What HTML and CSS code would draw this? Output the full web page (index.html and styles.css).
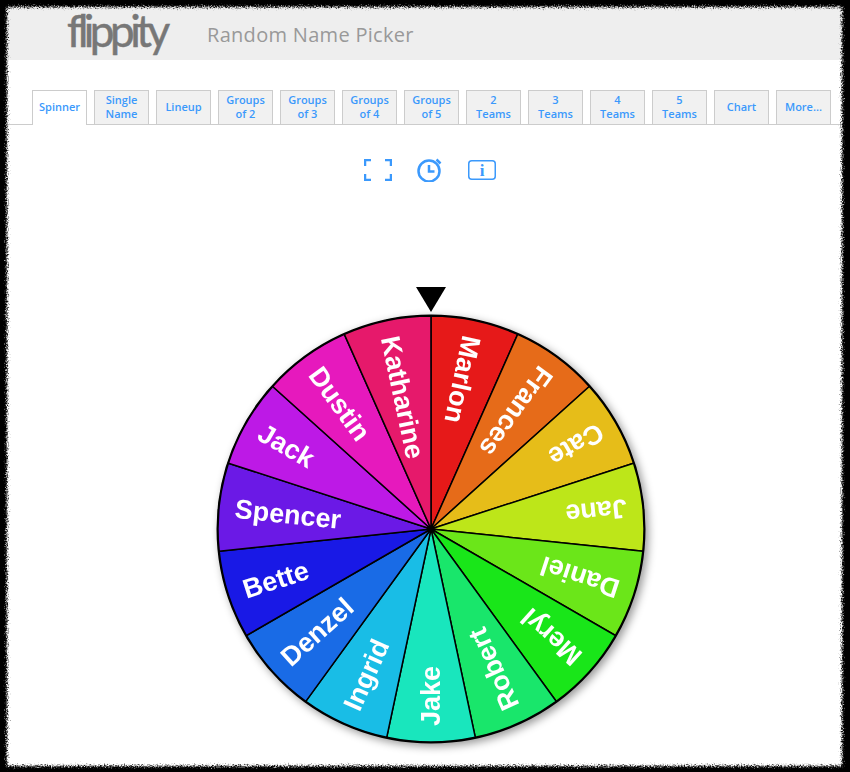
FILE: index.html
```html
<!DOCTYPE html>
<html lang="en">
<head>
    <meta charset="UTF-8">
    <title>Random Name Picker</title>
    <link rel="stylesheet" href="styles.css">
</head>
<body>

    <div class="sheet">
        <div class="header">
            <span class="logo">flippity</span>
            <span class="title">Random Name Picker</span>
        </div>

        <div class="tabs">
            <a class="tab active">Spinner</a>
            <a class="tab">Single<br>Name</a>
            <a class="tab">Lineup</a>
            <a class="tab">Groups<br>of 2</a>
            <a class="tab">Groups<br>of 3</a>
            <a class="tab">Groups<br>of 4</a>
            <a class="tab">Groups<br>of 5</a>
            <a class="tab">2<br>Teams</a>
            <a class="tab">3<br>Teams</a>
            <a class="tab">4<br>Teams</a>
            <a class="tab">5<br>Teams</a>
            <a class="tab">Chart</a>
            <a class="tab">More...</a>
        </div>

        <div class="tools">
            <svg class="tool" width="28" height="22" viewBox="0 0 28 22">
                <path d="M1 7V1H7M21 1H27V7M27 15V21H21M7 21H1V15" />
            </svg>
            <svg class="tool" width="26" height="24" viewBox="0 0 26 24">
                <circle cx="12" cy="13" r="10.5" />
                <path d="M12 7V13.5H17.5" />
                <path d="M19.5 1.5L23.5 5.5" />
            </svg>
            <svg class="tool" width="28" height="20" viewBox="0 0 28 20">
                <rect x="0.75" y="0.75" width="26.5" height="18.5" rx="3" />
                <text class="info-i" x="14" y="15.5">i</text>
            </svg>
        </div>

        <div class="stage">
            <svg class="wheel" width="440" height="470" viewBox="-220 -240 440 470">
                <path class="pointer" d="M-15 -242H15L0 -217Z" />
                <g class="spinner">
                    <circle r="213" fill="#000" />
                    <g transform="rotate(0)">
                        <path class="wedge" fill="hsl(0,80%,50%)" d="M0 0V-213A213 213 0 0 1 86.6 -194.6Z" />
                        <text class="name" transform="rotate(102) translate(-197 0)" dy="0.35em">Marlon</text>
                    </g>
                    <g transform="rotate(24)">
                        <path class="wedge" fill="hsl(24,80%,50%)" d="M0 0V-213A213 213 0 0 1 86.6 -194.6Z" />
                        <text class="name" transform="rotate(102) translate(-197 0)" dy="0.35em">Frances</text>
                    </g>
                    <g transform="rotate(48)">
                        <path class="wedge" fill="hsl(48,80%,50%)" d="M0 0V-213A213 213 0 0 1 86.6 -194.6Z" />
                        <text class="name" transform="rotate(102) translate(-197 0)" dy="0.35em">Cate</text>
                    </g>
                    <g transform="rotate(72)">
                        <path class="wedge" fill="hsl(72,80%,50%)" d="M0 0V-213A213 213 0 0 1 86.6 -194.6Z" />
                        <text class="name" transform="rotate(102) translate(-197 0)" dy="0.35em">Jane</text>
                    </g>
                    <g transform="rotate(96)">
                        <path class="wedge" fill="hsl(96,80%,50%)" d="M0 0V-213A213 213 0 0 1 86.6 -194.6Z" />
                        <text class="name" transform="rotate(102) translate(-197 0)" dy="0.35em">Daniel</text>
                    </g>
                    <g transform="rotate(120)">
                        <path class="wedge" fill="hsl(120,80%,50%)" d="M0 0V-213A213 213 0 0 1 86.6 -194.6Z" />
                        <text class="name" transform="rotate(102) translate(-197 0)" dy="0.35em">Meryl</text>
                    </g>
                    <g transform="rotate(144)">
                        <path class="wedge" fill="hsl(144,80%,50%)" d="M0 0V-213A213 213 0 0 1 86.6 -194.6Z" />
                        <text class="name" transform="rotate(102) translate(-197 0)" dy="0.35em">Robert</text>
                    </g>
                    <g transform="rotate(168)">
                        <path class="wedge" fill="hsl(168,80%,50%)" d="M0 0V-213A213 213 0 0 1 86.6 -194.6Z" />
                        <text class="name" transform="rotate(102) translate(-197 0)" dy="0.35em">Jake</text>
                    </g>
                    <g transform="rotate(192)">
                        <path class="wedge" fill="hsl(192,80%,50%)" d="M0 0V-213A213 213 0 0 1 86.6 -194.6Z" />
                        <text class="name" transform="rotate(102) translate(-197 0)" dy="0.35em">Ingrid</text>
                    </g>
                    <g transform="rotate(216)">
                        <path class="wedge" fill="hsl(216,80%,50%)" d="M0 0V-213A213 213 0 0 1 86.6 -194.6Z" />
                        <text class="name" transform="rotate(102) translate(-197 0)" dy="0.35em">Denzel</text>
                    </g>
                    <g transform="rotate(240)">
                        <path class="wedge" fill="hsl(240,80%,50%)" d="M0 0V-213A213 213 0 0 1 86.6 -194.6Z" />
                        <text class="name" transform="rotate(102) translate(-197 0)" dy="0.35em">Bette</text>
                    </g>
                    <g transform="rotate(264)">
                        <path class="wedge" fill="hsl(264,80%,50%)" d="M0 0V-213A213 213 0 0 1 86.6 -194.6Z" />
                        <text class="name" transform="rotate(102) translate(-197 0)" dy="0.35em">Spencer</text>
                    </g>
                    <g transform="rotate(288)">
                        <path class="wedge" fill="hsl(288,80%,50%)" d="M0 0V-213A213 213 0 0 1 86.6 -194.6Z" />
                        <text class="name" transform="rotate(102) translate(-197 0)" dy="0.35em">Jack</text>
                    </g>
                    <g transform="rotate(312)">
                        <path class="wedge" fill="hsl(312,80%,50%)" d="M0 0V-213A213 213 0 0 1 86.6 -194.6Z" />
                        <text class="name" transform="rotate(102) translate(-197 0)" dy="0.35em">Dustin</text>
                    </g>
                    <g transform="rotate(336)">
                        <path class="wedge" fill="hsl(336,80%,50%)" d="M0 0V-213A213 213 0 0 1 86.6 -194.6Z" />
                        <text class="name" transform="rotate(102) translate(-197 0)" dy="0.35em">Katharine</text>
                    </g>
                </g>
            </svg>
        </div>
    </div>

    <!-- torn black frame laid over the edge of the sheet -->
    <svg class="frame" width="850" height="772" viewBox="0 0 850 772">
        <defs>
            <filter id="torn" x="-5%" y="-5%" width="110%" height="110%">
                <feGaussianBlur stdDeviation="1.2" result="soft" />
                <feTurbulence type="fractalNoise" baseFrequency="0.7" numOctaves="2" seed="4" result="noise" />
                <feDisplacementMap in="soft" in2="noise" scale="7" xChannelSelector="R" yChannelSelector="G" />
            </filter>
        </defs>
        <rect class="frame-line" x="-23" y="-23" width="895" height="819" rx="30" filter="url(#torn)" />
    </svg>

</body>
</html>
```
FILE: styles.css
```css
html, body {
    margin: 0;
    padding: 0;
    height: 772px;
    overflow: hidden;
    background-color: #000;
}

body {
    font-family: "Open Sans", "Noto Sans", sans-serif;
}

.sheet {
    height: 772px;
    background-color: #fff;
}

.header {
    display: flex;
    align-items: center;
    height: 60px;
    padding-left: 67px;
    background-color: #eee;
    box-sizing: border-box;
}

.logo {
    width: 100px;
    font-family: Lato, sans-serif;
    font-size: 44px;
    line-height: 52px;
    letter-spacing: -4.5px;
    color: #777;
    -webkit-text-stroke: 0.5px #777;
}

.title {
    margin-left: 40px;
    margin-top: 8px;
    font-size: 20px;
    letter-spacing: 0.3px;
    color: #999;
}

.tabs {
    display: flex;
    gap: 7px;
    padding: 30px 0 0 32px;
    border-bottom: 1px solid #ccc;
    height: 34px;
}

.tab {
    display: flex;
    align-items: center;
    justify-content: center;
    width: 55px;
    height: 34px;
    padding-bottom: 2px;
    box-sizing: border-box;
    border: 1px solid #ccc;
    border-bottom: none;
    background-color: #f1f1f1;
    color: #3b99fc;
    font-size: 11px;
    font-weight: 600;
    line-height: 14px;
    text-align: center;
}

.tab.active {
    height: 35px;
    padding-bottom: 3px;
    background-color: #fff;
}

.tools {
    display: flex;
    justify-content: center;
    align-items: center;
    gap: 25px;
    height: 24px;
    margin-top: 33px;
    margin-left: 10px;
}

.tool {
    fill: none;
    stroke: #3b99fc;
    stroke-width: 2.5;
}

.tool:last-child {
    stroke-width: 1.5;
}

.info-i {
    fill: #3b99fc;
    stroke: none;
    font-family: "Liberation Serif", serif;
    font-size: 17px;
    font-weight: 700;
    text-anchor: middle;
}

.stage {
    display: flex;
    justify-content: center;
    margin-top: 107px;
    margin-left: 12px;
}

.wheel {
    overflow: visible;
}

.pointer {
    fill: #000;
}

.spinner {
    filter: drop-shadow(3px 3px 4px rgba(0, 0, 0, 0.4));
}

.wedge {
    stroke: #000;
    stroke-width: 1.5;
}

.spinner > circle {
    stroke: #000;
    stroke-width: 3;
}

.name {
    fill: #fff;
    font-family: "Liberation Sans", Arial, sans-serif;
    font-size: 27px;
    font-weight: 700;
}

.frame {
    position: absolute;
    top: 0;
    left: 0;
    pointer-events: none;
}

.frame-line {
    fill: none;
    stroke: #000;
    stroke-width: 60;
}
```
